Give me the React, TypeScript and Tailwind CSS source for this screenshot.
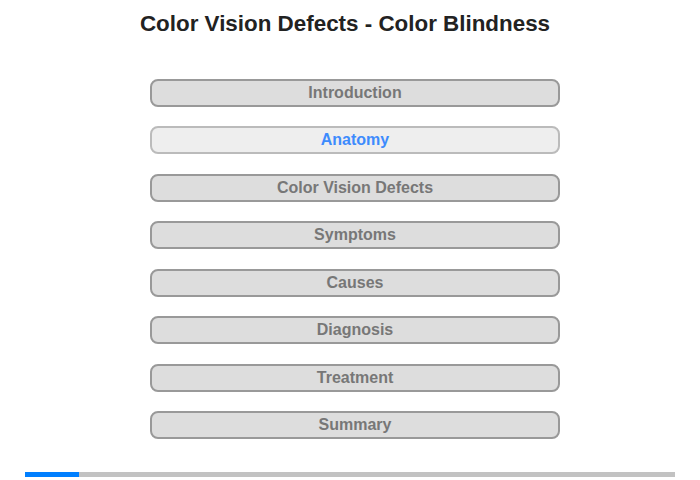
const sections = [
  "Introduction",
  "Anatomy",
  "Color Vision Defects",
  "Symptoms",
  "Causes",
  "Diagnosis",
  "Treatment",
  "Summary",
];

export default function App() {
  const current = 1;

  return (
    <div className="w-[700px] h-[480px] bg-white font-['Liberation_Sans',Arial,sans-serif]">
      {/* Title */}
      <h1 className="w-[690px] pt-[11px] text-center text-[22.4px] leading-[25px] font-bold text-[#222]">
        Color Vision Defects - Color Blindness
      </h1>

      {/* Menu */}
      <div className="mt-[43px] ml-[150px] w-[410px] flex flex-col gap-[19.43px]">
        {sections.map((name, i) => (
          <button
            key={name}
            className={`h-[28px] w-full rounded-[8px] border-2 text-[16px] leading-[18px] font-bold ${
              i === current
                ? "bg-[#eeeeee] border-[#bbbbbb] text-[#3d8bfd]"
                : "bg-[#dddddd] border-[#999999] text-[#777777]"
            }`}
          >
            {name}
          </button>
        ))}
      </div>

      {/* Progress */}
      <div className="mt-[33px] ml-[25px] w-[650px] h-[5px] bg-[#c2c2c2] flex">
        <div className="h-full w-[54px] bg-[#007fff]" />
      </div>
    </div>
  );
}
